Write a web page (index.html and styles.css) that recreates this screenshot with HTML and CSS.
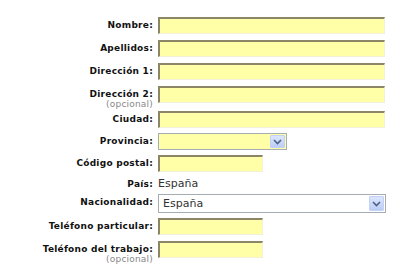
FILE: index.html
```html
<!DOCTYPE html>
<html lang="es">
<head>
    <meta charset="UTF-8">
    <meta name="viewport" content="width=device-width, initial-scale=1.0">
    <title>Datos personales</title>
    <link rel="stylesheet" href="styles.css">
</head>
<body>
    <form class="form">
        <div class="row">
            <label for="nombre">Nombre:</label>
            <input type="text" id="nombre" class="field long">
        </div>
        <div class="row">
            <label for="apellidos">Apellidos:</label>
            <input type="text" id="apellidos" class="field long">
        </div>
        <div class="row">
            <label for="dir1">Dirección 1:</label>
            <input type="text" id="dir1" class="field long">
        </div>
        <div class="row with-hint">
            <label for="dir2">Dirección 2:<span class="hint">(opcional)</span></label>
            <input type="text" id="dir2" class="field long">
        </div>
        <div class="row tight">
            <label for="ciudad">Ciudad:</label>
            <input type="text" id="ciudad" class="field long">
        </div>
        <div class="row tight">
            <label for="provincia">Provincia:</label>
            <div class="select mid yellow">
                <select id="provincia">
                    <option value=""></option>
                </select>
                <span class="arrow">
                    <svg width="9" height="6" viewBox="0 0 9 6"><path d="M1 1 L4.5 4.5 L8 1" fill="none" stroke="#4d6185" stroke-width="1.6"/></svg>
                </span>
            </div>
        </div>
        <div class="row">
            <label for="cp">Código postal:</label>
            <input type="text" id="cp" class="field short">
        </div>
        <div class="row text-row">
            <label>País:</label>
            <span class="value">España</span>
        </div>
        <div class="row tight">
            <label for="nacionalidad">Nacionalidad:</label>
            <div class="select long tall">
                <select id="nacionalidad">
                    <option value="es">España</option>
                </select>
                <span class="arrow">
                    <svg width="9" height="6" viewBox="0 0 9 6"><path d="M1 1 L4.5 4.5 L8 1" fill="none" stroke="#4d6185" stroke-width="1.6"/></svg>
                </span>
            </div>
        </div>
        <div class="row">
            <label for="tel1">Teléfono particular:</label>
            <input type="text" id="tel1" class="field short">
        </div>
        <div class="row with-hint">
            <label for="tel2">Teléfono del trabajo:<span class="hint">(opcional)</span></label>
            <input type="text" id="tel2" class="field short">
        </div>
    </form>
</body>
</html>
```

FILE: styles.css
```css
body {
    margin: 0;
    padding: 17px 0 0 0;
    background-color: #fff;
    font-family: 'DejaVu Sans', Verdana, sans-serif;
    color: #111;
}

.row {
    display: flex;
    align-items: flex-start;
    margin-bottom: 6px;
}

.row.with-hint {
    margin-bottom: 8px;
}

.row.tight {
    margin-bottom: 5px;
}

.row label {
    width: 153px;
    height: 17px;
    flex: none;
    margin-right: 5px;
    text-align: right;
    font-size: 9px;
    font-weight: bold;
    letter-spacing: 0.25px;
    line-height: 16px;
}

.hint {
    display: block;
    font-weight: normal;
    letter-spacing: 0.2px;
    color: #888;
    line-height: 9px;
    margin-top: -2px;
}

.field {
    box-sizing: border-box;
    height: 17px;
    margin: 0;
    padding: 0 2px;
    background-color: #ffffa8;
    border-style: solid;
    border-width: 2px 1px 1px 2px;
    border-color: #8c8566 #f2f0d8 #f2f0d8 #8c8566;
}

.long {
    width: 227px;
}

.mid {
    width: 129px;
}

.short {
    width: 105px;
}

.select {
    box-sizing: border-box;
    display: flex;
    height: 17px;
    border: 1px solid #a5acb2;
    background-color: #fff;
}

.select.yellow {
    background-color: #ffffa8;
}

.select.tall {
    height: 19px;
    width: 228px;
}

.select select {
    flex: 1;
    min-width: 0;
    border: none;
    margin: 0;
    padding: 0 0 0 4px;
    background: transparent;
    appearance: none;
    font-family: 'DejaVu Sans', Verdana, sans-serif;
    font-size: 11px;
    color: #333;
    outline: none;
}

.arrow {
    box-sizing: border-box;
    width: 15px;
    margin: 1px;
    display: flex;
    align-items: center;
    justify-content: center;
    background: linear-gradient(#dbe6fd, #bccdf6);
    border: 1px solid #c3d2f4;
    border-radius: 1px;
}

.text-row {
    margin: 5px 0 4px;
}

.text-row label {
    height: 12px;
    line-height: 12px;
}

.value {
    font-size: 11px;
    line-height: 12px;
    color: #333;
}
```
